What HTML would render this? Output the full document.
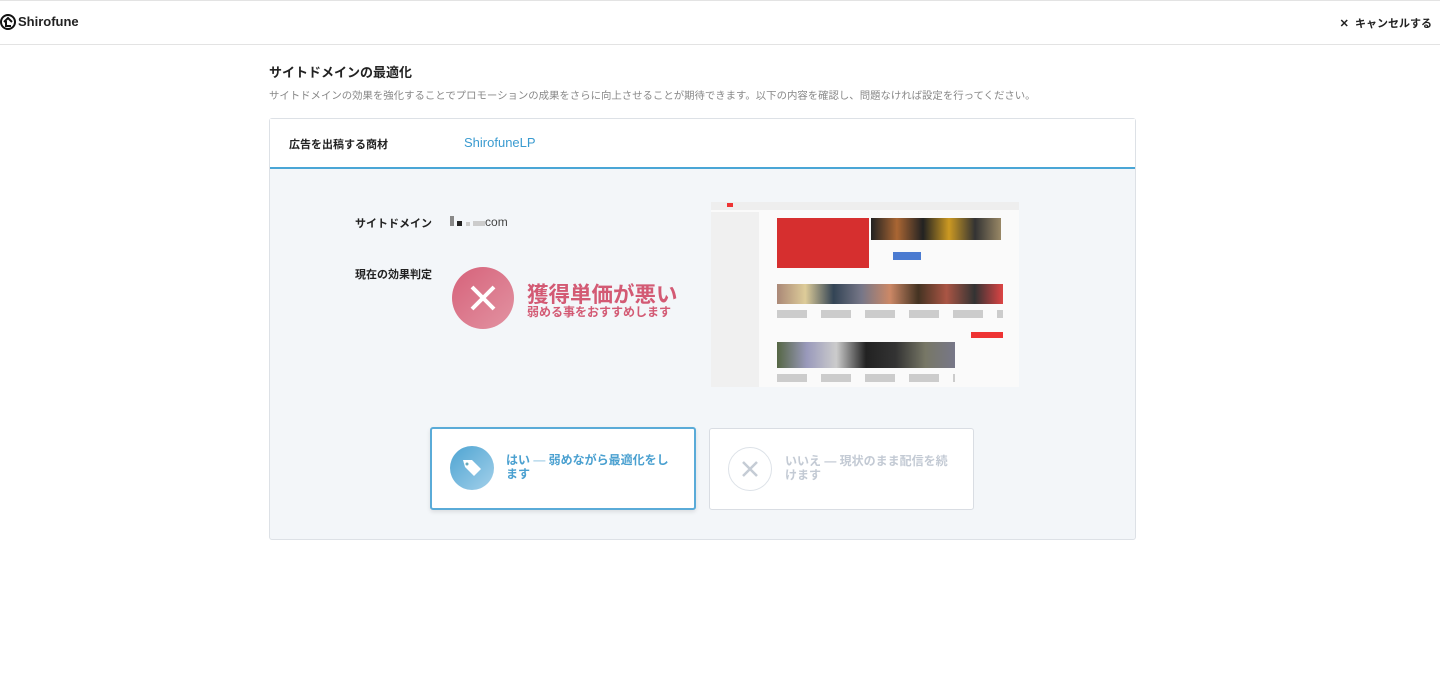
<!DOCTYPE html>
<html><head><meta charset="utf-8"><style>
*{box-sizing:border-box;margin:0;padding:0}
body{width:1440px;height:680px;background:#fff;font-family:"Liberation Sans","Noto Sans CJK JP",sans-serif;color:#222;position:relative;overflow:hidden}
.hdr{position:absolute;top:0;left:0;width:1440px;height:45px;border-top:1px solid #e3e3e3;border-bottom:1px solid #e3e3e3}
.abs{position:absolute}
</style></head><body>
<div class="hdr">
 <svg class="abs" style="left:0;top:12px" width="16" height="18" viewBox="0 0 16 18"><circle cx="8" cy="9" r="7" fill="none" stroke="#111" stroke-width="2"/><path d="M4 9 L8 5 L12 9 M6 8 V13 H11" fill="none" stroke="#111" stroke-width="2"/></svg>
 <div class="abs" style="left:18px;top:13px;font-size:13px;font-weight:bold">Shirofune</div>
 <div class="abs" style="right:8px;top:14px;font-size:11px;font-weight:bold;white-space:nowrap">✕&nbsp; キャンセルする</div>
</div>
<div class="abs" style="left:269px;top:62px;font-size:13px;font-weight:bold">サイトドメインの最適化</div>
<div class="abs" style="left:269px;top:87px;font-size:10.4px;color:#888;white-space:nowrap">サイトドメインの効果を強化することでプロモーションの成果をさらに向上させることが期待できます。以下の内容を確認し、問題なければ設定を行ってください。</div>
<div class="abs" style="left:269px;top:118px;width:867px;height:422px;border:1px solid #dde1e6;border-radius:3px;background:#f3f6f9">
 <div style="height:50px;background:#fff;border-bottom:2px solid #4aa6d6;position:relative">
  <div class="abs" style="left:19px;top:17px;font-size:11px;font-weight:bold">広告を出稿する商材</div>
  <div class="abs" style="left:194px;top:16px;font-size:13px;color:#3a9bd0">ShirofuneLP</div>
 </div>
 <div class="abs" style="left:85px;top:96px;font-size:11px;font-weight:bold">サイトドメイン</div>
 <div class="abs" style="left:180px;top:96px;font-size:12px;color:#444"><span style="display:inline-block;width:4px;height:10px;background:#888"></span> <span style="display:inline-block;width:5px;height:5px;background:#222"></span> <span style="display:inline-block;width:4px;height:4px;background:#ccc"></span> <span style="display:inline-block;width:12px;height:5px;background:#ccc"></span>com</div>
 <div class="abs" style="left:85px;top:147px;font-size:11px;font-weight:bold">現在の効果判定</div>
 <div class="abs" style="left:182px;top:148px;width:62px;height:62px;border-radius:50%;background:linear-gradient(135deg,#d6627a,#e293a2)"><svg width="62" height="62"><path d="M20 20 L42 42 M42 20 L20 42" stroke="#fff" stroke-width="4"/></svg></div>
 <div class="abs" style="left:257px;top:159px;font-size:21.5px;font-weight:bold;color:#d35a74">獲得単価が悪い</div>
 <div class="abs" style="left:257px;top:184px;font-size:12px;font-weight:bold;color:#d35a74">弱める事をおすすめします</div>
 <div class="abs" style="left:441px;top:83px;width:308px;height:185px;background:#fafafa">
  <div class="abs" style="left:0;top:0;width:308px;height:8px;background:#eee"></div>
  <div class="abs" style="left:16px;top:1px;width:6px;height:4px;background:#e33"></div>
  <div class="abs" style="left:0;top:10px;width:48px;height:175px;background:#f0f0f0"></div>
  <div class="abs" style="left:66px;top:16px;width:92px;height:50px;background:#d62f2f"></div>
  <div class="abs" style="left:160px;top:16px;width:130px;height:22px;background:linear-gradient(90deg,#222,#a63,#222,#c92,#333,#986)"></div>
  <div class="abs" style="left:182px;top:50px;width:28px;height:8px;background:#4b7bd1"></div>
  <div class="abs" style="left:66px;top:82px;width:226px;height:20px;background:linear-gradient(90deg,#a87,#dc9,#345,#778,#c86,#432,#a54,#333,#d44)"></div>
  <div class="abs" style="left:66px;top:108px;width:226px;height:8px;background:repeating-linear-gradient(90deg,#ccc 0 30px,#fafafa 30px 44px)"></div>
  <div class="abs" style="left:260px;top:130px;width:32px;height:6px;background:#e33"></div>
  <div class="abs" style="left:66px;top:140px;width:178px;height:26px;background:linear-gradient(90deg,#564,#99b,#ccc,#222,#333,#776,#778)"></div>
  <div class="abs" style="left:66px;top:172px;width:178px;height:8px;background:repeating-linear-gradient(90deg,#ccc 0 30px,#fafafa 30px 44px)"></div>
 </div>
 <div class="abs" style="left:160px;top:308px;width:266px;height:83px;background:#fff;border:2px solid #5aabd8;border-radius:3px;box-shadow:0 2px 4px rgba(0,0,0,.1)">
  <div class="abs" style="left:18px;top:17px;width:44px;height:44px;border-radius:50%;background:linear-gradient(135deg,#4ea4d2,#a3d0ea)"><svg width="44" height="44"><path d="M13 14 H22 L31 23 L24 30 L15 21 Z" fill="#fff"/><circle cx="17" cy="18" r="1.5" fill="#6ab"/></svg></div>
  <div class="abs" style="left:74px;top:24px;width:172px;font-size:12px;font-weight:bold;color:#4aa0d0;line-height:14px">はい <span style="color:#a8d0e8">—</span> 弱めながら最適化をします</div>
 </div>
 <div class="abs" style="left:439px;top:309px;width:265px;height:82px;background:#fff;border:1px solid #d9dde3;border-radius:3px">
  <div class="abs" style="left:18px;top:18px;width:44px;height:44px;border-radius:50%;border:1px solid #dde2e8"><svg width="42" height="42"><path d="M14 14 L28 28 M28 14 L14 28" stroke="#c5ccd5" stroke-width="2.5"/></svg></div>
  <div class="abs" style="left:75px;top:25px;width:170px;font-size:12px;font-weight:bold;color:#c3cad4;line-height:14px">いいえ — 現状のまま配信を続けます</div>
 </div>
</div>
</body></html>
